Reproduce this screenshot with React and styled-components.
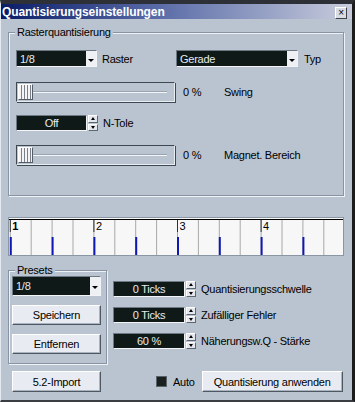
import React from "react";
import styled, { createGlobalStyle } from "styled-components";

const GlobalStyle = createGlobalStyle`
  body {
    margin: 0;
    font-family: "Liberation Sans", Arial, sans-serif;
    font-size: 11px;
    color: #000;
  }
`;

const Window = styled.div`
  width: 355px;
  height: 402px;
  box-sizing: border-box;
  background: #bac4d0;
  border-top: 4px solid #2d3036;
  border-left: 1px solid #e4e9ef;
  border-right: 3px solid #1c1c1c;
  border-bottom: 2px solid #3a3d42;
  display: flex;
  flex-direction: column;
  letter-spacing: -0.25px;
`;

const TitleBar = styled.div`
  height: 15px;
  display: flex;
  align-items: center;
  justify-content: space-between;
  padding: 0 5px 0 1px;
  background: linear-gradient(90deg, #0a1c68 0%, #5a6ca8 45%, #c8ccdc 100%);
  color: #fff;
  font-weight: bold;
  font-size: 12px;
  letter-spacing: -0.1px;
`;

const CloseButton = styled.div`
  width: 10px;
  height: 10px;
  margin-top: 2px;
  background: #d8dce4;
  border: 1px solid;
  border-color: #fff #404448 #404448 #fff;
  color: #000;
  font-size: 10px;
  line-height: 9px;
  text-align: center;
  font-weight: normal;
`;

const Group = styled.div`
  position: relative;
  box-sizing: border-box;
  border: 1px solid #8894a4;
  box-shadow: inset 1px 1px 0 #eef2f6, 1px 1px 0 #eef2f6;
  margin: ${(p) => p.$mt || 0}px 0 0 ${(p) => p.$ml || 7}px;
  width: ${(p) => p.$w}px;
  height: ${(p) => p.$h}px;
  padding: ${(p) => p.$pad};
  display: flex;
  flex-direction: column;
`;

const Legend = styled.span`
  position: absolute;
  top: -7px;
  left: 6px;
  padding: 0 2px;
  background: #bac4d0;
  line-height: 12px;
`;

const Row = styled.div`
  display: flex;
  align-items: center;
  height: ${(p) => p.$h}px;
  margin-top: ${(p) => p.$mt || 0}px;
`;

const Label = styled.span`
  flex-shrink: 0;
  width: ${(p) => (p.$w ? `${p.$w}px` : "auto")};
  margin-left: ${(p) => p.$ml || 0}px;
  white-space: nowrap;
`;

const Field = styled.div`
  flex-shrink: 0;
  display: flex;
  width: ${(p) => p.$w}px;
  height: 100%;
  box-sizing: border-box;
  background: #0f1a18;
  border: 1px solid;
  border-color: #6c7884 #f2f4f8 #f2f4f8 #6c7884;
`;

const FieldText = styled.div`
  flex: 1;
  color: #e8ecec;
  display: flex;
  align-items: center;
  justify-content: ${(p) => (p.$center ? "center" : "flex-start")};
  padding-left: ${(p) => (p.$center ? 0 : 3)}px;
`;

const DropArrow = styled.div`
  width: 10px;
  background: #eef0f4;
  display: flex;
  align-items: center;
  justify-content: center;
  &::after {
    content: "";
    border-left: 3px solid transparent;
    border-right: 3px solid transparent;
    border-top: 3px solid #000;
    margin-top: 3px;
  }
`;

const SpinBox = styled.div`
  display: flex;
  height: 100%;
`;

const SpinButtons = styled.div`
  width: 10px;
  margin-left: 1px;
  display: flex;
  flex-direction: column;
  gap: 1px;
`;

const SpinBtn = styled.div`
  flex: 1;
  background: #e4e8ee;
  border: 1px solid;
  border-color: #fff #5c6670 #5c6670 #fff;
  display: flex;
  align-items: center;
  justify-content: center;
  &::after {
    content: "";
    border-left: 2.5px solid transparent;
    border-right: 2.5px solid transparent;
    ${(p) =>
      p.$up
        ? "border-bottom: 3px solid #000;"
        : "border-top: 3px solid #000;"}
  }
`;

const Track = styled.div`
  position: relative;
  flex-shrink: 0;
  width: 159px;
  height: 100%;
  box-sizing: border-box;
  border: 1px solid;
  border-color: #3e4852 #e8edf2 #e8edf2 #3e4852;
  box-shadow: 1px 1px 0 #3e4852;
  display: flex;
  align-items: center;
  padding-left: 1px;
`;

const Thumb = styled.div`
  width: 15px;
  height: 16px;
  box-sizing: border-box;
  background: repeating-linear-gradient(
    90deg,
    #f4f4f6 0px,
    #f4f4f6 2px,
    #7a7f88 2px,
    #7a7f88 3px
  );
  border: 1px solid;
  border-color: #fff #545c66 #545c66 #fff;
`;

const TrackLine = styled.div`
  flex: 1;
  height: 1px;
  margin-right: 7px;
  background: #f4f6fa;
  box-shadow: 0 -1px 0 #9aa4b0;
`;

const Timeline = styled.div`
  margin: 21px 0 0 7px;
  width: 336px;
  height: 39px;
  box-sizing: border-box;
  border: 1px solid #8a96a4;
  background: #f7f7f7;
  svg {
    display: block;
  }
`;

const Lower = styled.div`
  display: flex;
`;

const Stack = styled.div`
  display: flex;
  flex-direction: column;
  margin: ${(p) => p.$m};
  gap: ${(p) => p.$gap}px;
`;

const Button = styled.div`
  flex-shrink: 0;
  width: ${(p) => p.$w}px;
  height: ${(p) => p.$h || 21}px;
  box-sizing: border-box;
  background: #e8ecf2;
  border: 1px solid;
  border-color: #ffffff #4e5862 #4e5862 #ffffff;
  box-shadow: inset -1px -1px 0 #aab4c0;
  display: flex;
  align-items: center;
  justify-content: center;
  margin-left: ${(p) => p.$ml || 0}px;
`;

const Footer = styled.div`
  display: flex;
  align-items: center;
  margin: 7px 0 0 11px;
  height: 21px;
`;

const Check = styled.div`
  width: 11px;
  height: 11px;
  box-sizing: border-box;
  background: #1a2020;
  border: 1px solid #5a626a;
  margin-left: 55px;
`;

const Dropdown = ({ w, text }) => (
  <Field $w={w}>
    <FieldText>{text}</FieldText>
    <DropArrow />
  </Field>
);

const Spinner = ({ w, text }) => (
  <SpinBox>
    <Field $w={w}>
      <FieldText $center>{text}</FieldText>
    </Field>
    <SpinButtons>
      <SpinBtn $up />
      <SpinBtn />
    </SpinButtons>
  </SpinBox>
);

const Slider = () => (
  <Track>
    <Thumb />
    <TrackLine />
  </Track>
);

const step = 20.9;
const cols = Array.from({ length: 16 }, (_, i) => 1.3 + i * step);

const Grid = () => (
  <svg width="334" height="37">
    <line x1="0" y1="1.5" x2="334" y2="1.5" stroke="#000" />
    {cols.map((x, i) => (
      <g key={i}>
        <line x1={x} y1="2" x2={x} y2="37" stroke="#a8a8a8" />
        {i % 4 === 0 && (
          <line x1={x} y1="2" x2={x} y2="14" stroke="#303030" />
        )}
        {i % 2 === 0 && (
          <rect x={x - 0.5} y="19" width="2" height="18" fill="#1018b4" />
        )}
        {i % 4 === 0 && (
          <text
            x={x + 2}
            y="12"
            fontSize="11"
            fontFamily="Liberation Sans, Arial, sans-serif"
            fontWeight={i === 0 ? "bold" : "normal"}
            fill="#000"
          >
            {i / 4 + 1}
          </text>
        )}
      </g>
    ))}
  </svg>
);

export default function App() {
  return (
    <>
      <GlobalStyle />
      <Window>
        <TitleBar>
          <span>Quantisierungseinstellungen</span>
          <CloseButton>×</CloseButton>
        </TitleBar>

        <Group $mt={13} $w={336} $h={164} $pad="17px 0 0 7px">
          <Legend>Rasterquantisierung</Legend>
          <Row $h={17}>
            <Dropdown w={81} text="1/8" />
            <Label $ml={5} $w={74}>Raster</Label>
            <Dropdown w={122} text="Gerade" />
            <Label $ml={6}>Typ</Label>
          </Row>
          <Row $h={20} $mt={15}>
            <Slider />
            <Label $ml={8} $w={41}>0 %</Label>
            <Label>Swing</Label>
          </Row>
          <Row $h={16} $mt={13}>
            <Spinner w={71} text="Off" />
            <Label $ml={5}>N-Tole</Label>
          </Row>
          <Row $h={20} $mt={14}>
            <Slider />
            <Label $ml={8} $w={41}>0 %</Label>
            <Label>Magnet. Bereich</Label>
          </Row>
        </Group>

        <Timeline>
          <Grid />
        </Timeline>

        <Lower>
          <Group $mt={14} $w={99} $h={94} $pad="5px 0 0 3px">
            <Legend>Presets</Legend>
            <Stack $m="0" $gap={9}>
              <Row $h={20}>
                <Dropdown w={89} text="1/8" />
              </Row>
              <Button $w={89} $h={20}>Speichern</Button>
              <Button $w={89} $h={20}>Entfernen</Button>
            </Stack>
          </Group>
          <Stack $m="25px 0 0 6px" $gap={10}>
            <Row $h={16}>
              <Spinner w={72} text="0 Ticks" />
              <Label $ml={5}>Quantisierungsschwelle</Label>
            </Row>
            <Row $h={16}>
              <Spinner w={72} text="0 Ticks" />
              <Label $ml={5}>Zufälliger Fehler</Label>
            </Row>
            <Row $h={16}>
              <Spinner w={72} text="60 %" />
              <Label $ml={5}>Näherungsw.Q - Stärke</Label>
            </Row>
          </Stack>
        </Lower>

        <Footer>
          <Button $w={89}>5.2-Import</Button>
          <Check />
          <Label $ml={6}>Auto</Label>
          <Button $w={141} $ml={7}>Quantisierung anwenden</Button>
        </Footer>
      </Window>
    </>
  );
}
